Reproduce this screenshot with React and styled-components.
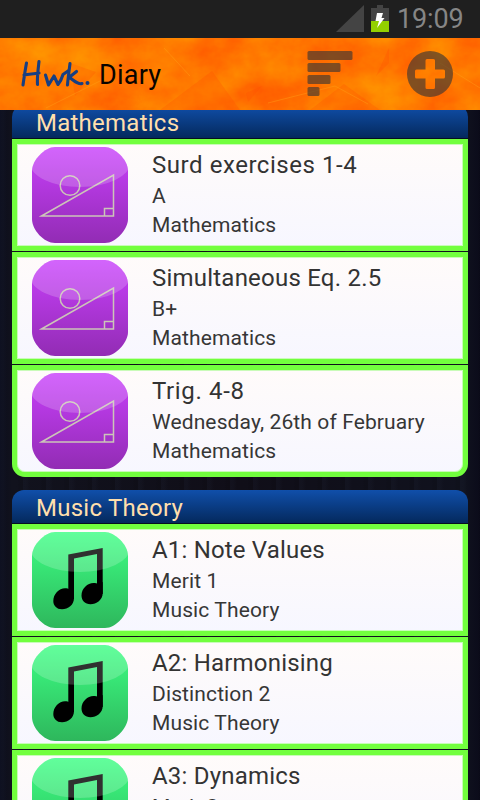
import React from "react";
import styled, { createGlobalStyle } from "styled-components";

const Global = createGlobalStyle`
  * { box-sizing: border-box; }
  html, body { margin: 0; padding: 0; overflow: hidden; background: #0e0e1b; }
  body { font-family: Roboto, "Noto Sans", sans-serif; }
`;

const Screen = styled.div`
  width: 480px;
  height: 800px;
  overflow: hidden;
  display: flex;
  flex-direction: column;
  background:
    repeating-linear-gradient(90deg, rgba(40, 48, 70, 0.12) 0 3px, transparent 7px 17px, rgba(0, 0, 0, 0.08) 20px 23px),
    linear-gradient(90deg, #0b0d1c 0, #11121d 12px, #100e18 240px, #10121e 465px, #0b0b1a 480px);
`;

const StatusBar = styled.div`
  flex: none;
  height: 38px;
  display: flex;
  justify-content: flex-end;
  align-items: flex-start;
  padding-right: 14px;
  background: #1f1f1f;
`;

const StatusIcons = styled.svg`
  display: block;
  width: 56px;
  height: 38px;
`;

const Clock = styled.span`
  width: 69px;
  margin-left: 6px;
  font-size: 27px;
  font-weight: 400;
  line-height: 38px;
  letter-spacing: -0.15px;
  color: #868686;
  white-space: nowrap;
`;

const ActionBar = styled.header`
  flex: none;
  position: relative;
  height: 72px;
  display: flex;
  align-items: center;
  padding: 0 24px 0 20px;
  background: #ff7b00;
`;

const Texture = styled.svg`
  position: absolute;
  inset: 0;
  width: 480px;
  height: 72px;
`;

const Logo = styled.svg`
  position: relative;
  width: 74px;
  height: 72px;
`;

const AppTitle = styled.h1`
  position: relative;
  flex: 1;
  margin: 0;
  padding: 2px 0 0 5px;
  font-size: 27px;
  font-weight: 400;
  letter-spacing: 0.25px;
  color: #080400;
`;

const ActionIcon = styled.svg`
  position: relative;
  width: 50px;
  height: 72px;
  margin-left: ${(p) => p.$gap || 0}px;
`;

const List = styled.main`
  flex: 1;
  min-height: 0;
  overflow: hidden;
  padding: 0 12px;
`;

const Group = styled.section`
  margin-top: ${(p) => (p.$scrolled ? -5 : 13)}px;
`;

const GroupHeader = styled.h2`
  height: 34px;
  margin: 0;
  padding-left: 24px;
  border-radius: 12px 12px 0 0;
  border-bottom: 1px solid #06101f;
  background: linear-gradient(#104faa, #04295d);
  color: #ffdfac;
  font-size: 24px;
  font-weight: 400;
  line-height: 36px;
  letter-spacing: 0.25px;
`;

const Entry = styled.article`
  height: 112px;
  display: flex;
  align-items: flex-start;
  padding: 3px 15px;
  border: 5px solid #72ff3e;
  border-radius: ${(p) => (p.$last ? "0 0 13px 13px" : 0)};
  background: linear-gradient(#fffbfa, #f7f7ff);
  box-shadow: inset 0 0 0 1px #c9fbb9;
  & + & { margin-top: 1px; }
`;

const Tile = styled.svg`
  flex: none;
  width: 96px;
  height: 96px;
`;

const Details = styled.div`
  padding-left: 24px;
  color: #363636;
  white-space: nowrap;
`;

const EntryTitle = styled.h3`
  height: 35px;
  margin: 0;
  font-size: 24px;
  font-weight: 400;
  line-height: 37px;
  letter-spacing: ${(p) => p.$tracking}px;
  color: #333;
`;

const Line = styled.p`
  margin: 0;
  font-size: 21px;
  line-height: 29px;
  letter-spacing: 0.12px;
`;

const groups = [
  {
    name: "Mathematics",
    kind: "maths",
    entries: [
      ["Surd exercises 1-4", "A", 0.55],
      ["Simultaneous Eq. 2.5", "B+", 0.22],
      ["Trig. 4-8", "Wednesday, 26th of February", 0.65],
    ],
  },
  {
    name: "Music Theory",
    kind: "music",
    entries: [
      ["A1: Note Values", "Merit 1", 0.18],
      ["A2: Harmonising", "Distinction 2", 0.2],
      ["A3: Dynamics", "Merit 2", 0.2],
    ],
  },
];

const tileShape = "M23 0H73C82 0 96 12 96 24V72C96 82 84 96 73 96H23C12 96 0 83 0 72V24C0 13 13 0 23 0Z";

function SubjectTile({ kind, id }) {
  const maths = kind === "maths";
  return (
    <Tile viewBox="0 0 96 96">
      <defs>
        <linearGradient id={id} x1="0" y1="0" x2="0" y2="1">
          <stop offset="0" stopColor={maths ? "#c940fc" : "#3dff84"} />
          <stop offset="1" stopColor={maths ? "#922cb4" : "#2eb75c"} />
        </linearGradient>
        <clipPath id={id + "c"}><path d={tileShape} /></clipPath>
      </defs>
      <path d={tileShape} fill={`url(#${id})`} />
      {maths ? (
        <g fill="none" stroke="#ccc5b8" strokeWidth="1.500">
          <path d="M9.500 69L81.500 28V69Z" />
          <circle cx="38" cy="38.500" r="9.800" />
          <path d="M72.500 69V61.500H81.500" />
        </g>
      ) : (
        <g fill="#000">
          <path d="M36.300 22.500L70.700 16V62H65V22L42 26.500V67H36.300Z" />
          <path d="M42 56V66C42 73 36 77.300 30 77.300C24.500 77.300 21.300 73.500 21.300 69C21.300 62 27 56.200 33 56.200C35 56.200 36.500 56.500 37.500 57.500Z" />
          <path d="M70.700 50V61C70.700 68 64.500 72.200 58.500 72.200C53 72.200 49.500 68.500 49.500 63.500C49.500 56.500 55.500 51 61.500 51C63.500 51 65 51.300 66 52Z" />
        </g>
      )}
      <ellipse cx="48" cy="16" rx="50" ry="24" fill="#fff" fillOpacity=".19" clipPath={`url(#${id}c)`} />
    </Tile>
  );
}

export default function App() {
  return (
    <Screen>
      <Global />
      <StatusBar>
        <StatusIcons viewBox="335 0 56 38">
          <path d="M336 32L364 5V32Z" fill="#444" />
          <path d="M377 5H383V8H389V22H371V8H377Z" fill="#444" />
          <path d="M371 21H389V32H371Z" fill="#93d000" />
          <path d="M377 13H383L381.500 18H384.500L377 28L379 21H375.500Z" fill="#fff" />
        </StatusIcons>
        <Clock>19:09</Clock>
      </StatusBar>
      <ActionBar>
        <Texture viewBox="0 0 480 72">
          <defs>
            <filter id="blotches" x="0" y="0" width="1" height="1" colorInterpolationFilters="sRGB">
              <feTurbulence type="fractalNoise" baseFrequency=".02 .025" numOctaves="5" seed="8" />
              <feColorMatrix values="0 0 0 0 1  .32 0 0 0 .315  0 0 0 0 0  0 0 0 0 1" />
            </filter>
          </defs>
          <rect width="480" height="72" filter="url(#blotches)" />
          <g fill="#ff4d00" fillOpacity=".25">
            <path d="M70 25L96 34L75 58ZM160 72L212 33L240 72ZM376 38L389 10V25ZM246 55L262 48L248 64ZM310 72L344 46L380 72Z" />
          </g>
          <g fill="none" stroke="#ffa31a" strokeOpacity=".4">
            <path d="M46 70L102 42M164 10L190 38M268 65L335 48L368 66M440 25L480 50" />
          </g>
        </Texture>
        <Logo viewBox="20 38 74 72">
          <g fill="none" stroke="#173f82" strokeWidth="3.100" strokeLinecap="round" strokeLinejoin="round">
            <path d="M26.500 63C25 71 24 78 23 85M39 61.500C38 70 37 77 37.500 84.500M24 75C30 74 34 74 39 73" />
            <path d="M45.500 75L48.500 85L54 76L58 84.500C61 81 62 78 63 74.500L68 71" />
            <path d="M70 63.500C69 72 68 78 67.500 85M76.500 71.500L69 77.500C73 79 77 85 82 83.500" />
          </g>
          <circle cx="87.500" cy="83" r="2" fill="#173f82" />
        </Logo>
        <AppTitle>Diary</AppTitle>
        <ActionIcon viewBox="305 38 50 72">
          <g fill="#333" fillOpacity=".62">
            <rect x="307.500" y="51" width="45" height="9" rx="1.500" />
            <rect x="307.500" y="63" width="33" height="9" rx="1.500" />
            <rect x="307.500" y="75" width="23" height="9" rx="1.500" />
            <rect x="307.500" y="87" width="12" height="9" rx="1.500" />
          </g>
        </ActionIcon>
        <ActionIcon $gap={51} viewBox="406 38 50 72">
          <path fill="#333" fillOpacity=".62" fillRule="evenodd" d="M430 51A23 23 0 1 1 430 97A23 23 0 1 1 430 51ZM427 59Q425.500 59 425.500 60.500V69.500H416.500Q415 69.500 415 71V77Q415 78.500 416.500 78.500H425.500V87.500Q425.500 89 427 89H433.500Q435 89 435 87.500V78.500H443.500Q445 78.500 445 77V71Q445 69.500 443.500 69.500H435V60.500Q435 59 433.500 59Z" />
        </ActionIcon>
      </ActionBar>
      <List>
        {groups.map((group, g) => (
          <Group key={group.name} $scrolled={g === 0}>
            <GroupHeader>{group.name}</GroupHeader>
            {group.entries.map(([title, result, tracking], i) => (
              <Entry key={title} $last={group.kind === "maths" && i === group.entries.length - 1}>
                <SubjectTile kind={group.kind} id={`tile${g}${i}`} />
                <Details>
                  <EntryTitle $tracking={tracking}>{title}</EntryTitle>
                  <Line>{result}</Line>
                  <Line>{group.name}</Line>
                </Details>
              </Entry>
            ))}
          </Group>
        ))}
      </List>
    </Screen>
  );
}
